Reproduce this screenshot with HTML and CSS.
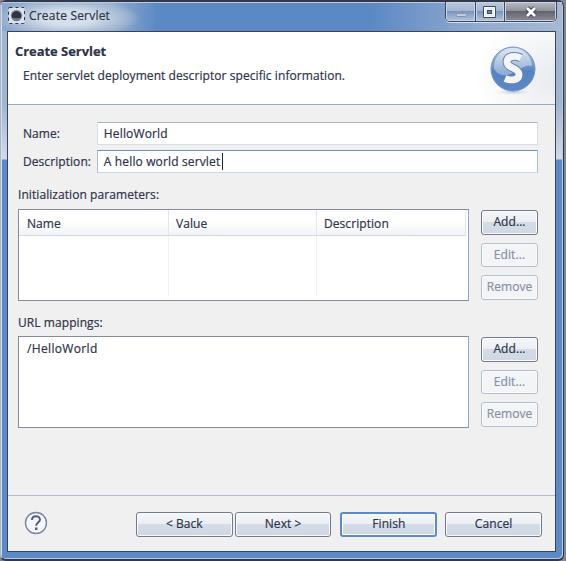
FILE: index.html
```html
<!DOCTYPE html>
<html lang="en">
<head>
<meta charset="utf-8">
<title>Create Servlet</title>
<link rel="stylesheet" href="styles.css">
</head>
<body>
<div class="window">
  <div class="titlebar">
    <svg class="app-icon" width="17" height="17" viewBox="0 0 17 17">
      <rect x=".5" y=".5" width="16" height="16" rx="1" fill="#d9e0e8" stroke="#30364a" stroke-dasharray="3 3"/>
      <circle cx="8.5" cy="8.5" r="6.500" fill="#a2a8b3" stroke="#e9edf2"/>
      <path d="M3.500 9a5 5 0 0 1 10 0l-1 2.500h-8z" fill="#303448"/>
      <path d="M5.500 13h6" stroke="#454b5c"/>
    </svg>
    <span class="title">Create Servlet</span>
    <div class="controls">
      <div class="control minimize"><svg width="30" height="20"><rect x="10.5" y="11.5" width="10" height="3" rx="1" fill="#c2ccda" stroke="#8292ac"/></svg></div>
      <div class="control maximize"><svg width="28" height="20"><rect x="7" y="4" width="13" height="12" rx="1" fill="#454c62"/><rect x="8.5" y="5.5" width="10" height="9" fill="#e8edf4" stroke="#fff"/><rect x="11.5" y="8.5" width="4" height="3" fill="#6984af" stroke="#454c62"/></svg></div>
      <div class="control close"><svg width="51" height="20"><path d="m22 6 8 8m0-8-8 8" stroke="#454957" stroke-width="5"/><path d="m22 6 8 8m0-8-8 8" stroke="#fff" stroke-width="2.8"/></svg></div>
    </div>
  </div>
  <main class="client">
    <header class="banner">
      <div>
        <h1>Create Servlet</h1>
        <p>Enter servlet deployment descriptor specific information.</p>
      </div>
      <svg class="logo" width="50" height="54" viewBox="0 0 50 54">
        <defs>
          <linearGradient id="ball" x2="0" y2="1"><stop stop-color="#b6c7df"/><stop offset=".4" stop-color="#7799cb"/><stop offset=".55" stop-color="#5583c2"/><stop offset="1" stop-color="#5b88c6"/></linearGradient>
          <linearGradient id="shine" x2="0" y2="1"><stop stop-color="#f2f5fa"/><stop offset="1" stop-color="#a8bddb"/></linearGradient>
          <radialGradient id="shade"><stop stop-color="#b9c2cf"/><stop offset="1" stop-color="#fff" stop-opacity="0"/></radialGradient>
        </defs>
        <ellipse cx="25" cy="48" rx="22" ry="4" fill="url(#shade)"/>
        <circle cx="25" cy="25" r="22" fill="url(#ball)" stroke="#7595c4"/>
        <path d="M6 24a19 19 0 0 1 38-2c-8-3-14 7-25 9-6 1-11-2-13-7z" fill="url(#shine)" opacity=".7"/>
        <path d="M33 14c-6-3-14-2-14 4 0 7 12 5 12 12.500 0 6-8 6.500-14 4" fill="none" stroke="#6a85ae" stroke-width="8.800"/>
        <path d="M33 14c-6-3-14-2-14 4 0 7 12 5 12 12.500 0 6-8 6.500-14 4" fill="none" stroke="#f3f4f6" stroke-width="6.800"/>
      </svg>
    </header>
    <section class="content">
      <div class="field"><label>Name:</label><div class="input"><span>HelloWorld</span></div></div>
      <div class="field"><label>Description:</label><div class="input active"><span>A hello world servlet</span><i class="caret"></i></div></div>
      <h2 class="init">Initialization parameters:</h2>
      <div class="group">
        <div class="table">
          <div class="thead"><span>Name</span><span>Value</span><span>Description</span></div>
          <div class="tbody"><span></span><span></span><span></span></div>
        </div>
        <div class="actions"><div class="button">Add...</div><div class="button disabled">Edit...</div><div class="button disabled">Remove</div></div>
      </div>
      <h2 class="urls">URL mappings:</h2>
      <div class="group">
        <div class="table list"><span>/HelloWorld</span></div>
        <div class="actions"><div class="button">Add...</div><div class="button disabled">Edit...</div><div class="button disabled">Remove</div></div>
      </div>
    </section>
    <footer class="footer">
      <svg class="help" width="24" height="24" viewBox="0 0 24 24"><circle cx="12" cy="12" r="10.5" fill="#f4f6f9" stroke="#7a8599" stroke-width="1.4"/><path d="M8 9c0-5 8-5 8-.5 0 3-3.800 3-3.800 6.200" fill="none" stroke="#535d78" stroke-width="2"/><rect x="11" y="16.500" width="2.500" height="2.500" fill="#535d78"/></svg>
      <div class="button wide back">&lt; Back</div>
      <div class="button wide next">Next &gt;</div>
      <div class="button wide default">Finish</div>
      <div class="button wide cancel">Cancel</div>
    </footer>
  </main>
</div>
</body>
</html>
```
FILE: styles.css
```css
* { box-sizing: border-box; }
body {
  margin: 0;
  width: 566px;
  height: 561px;
  overflow: hidden;
  background: #85858e;
  color: #2e3449;
  font: 12px/16px "Open Sans", "Noto Sans", sans-serif;
  letter-spacing: .07px;
  -webkit-text-stroke: .2px;
}
.window {
  width: 564px;
  height: 561px;
  padding: 0 6px 6px 6px;
  border: 1px solid #34384b;
  border-left-color: #a9b6c7;
  border-top-width: 2px;
  border-bottom-width: 2px;
  border-radius: 6px;
  background: linear-gradient(#a1b5d0 0, #a1b5d0 100px, #cfdae7 157px, #5c8ac6 158px);
  box-shadow: inset 1px 1px #d2deeb, inset -1px -1px #b5c9e1;
}
.titlebar {
  display: flex;
  height: 29px;
  margin: 0 -5px;
  padding: 0 5px;
  background:
    radial-gradient(ellipse 72px 20px at 66px 15px, #d5dfeb 35%, #a8bcd6 75%, transparent),
    linear-gradient(90deg, #8ba7ce, #a0b5d2 100px, #5c89c4 155px, #5c89c4 370px, #92acd0 480px, #a5b9d3);
  border-top: 1px solid #b9cbe1;
}
.app-icon { margin: 4px 0 0 1px; }
.title { margin: 5px 0 0 4px; letter-spacing: .2px; }
.controls {
  display: flex;
  height: 20px;
  margin: -1px 0 0 auto;
  border: 1px solid #40465c;
  border-top: 0;
  border-radius: 0 0 5px 5px;
  box-shadow: 0 1px #d5e0ed;
  overflow: hidden;
}
.control {
  border-right: 1px solid #444c64;
  background: linear-gradient(#bbc9dc 0, #a3b6d1 45%, #7794bd 48%, #b3c5de);
  box-shadow: inset 0 0 0 1px #c7d4e4;
}
.control svg { display: block; }
.minimize { width: 30px; }
.maximize { width: 29px; }
.close {
  width: 51px;
  border: 0;
  background: linear-gradient(#bbbbc1 0, #92929b 45%, #62626e 48%, #8e8e98);
}
.client {
  width: 549px;
  height: 521px;
  border: 1px solid #3b4359;
  background: #f0f0f0;
}
.banner {
  display: flex;
  justify-content: space-between;
  height: 73px;
  padding: 0 17px 0 7px;
  border-bottom: 1px solid #92a8c5;
  background: radial-gradient(ellipse 80px 75px at 100% 65%, #e8ebef, transparent), #fff;
}
h1, h2, p { margin: 0; }
h1 { margin-top: 10px; font: 700 13px/18px "Open Sans", sans-serif; letter-spacing: -.05px; }
p { margin: 8px 0 0 8px; }
.logo { margin-top: 12px; }
.content { height: 390px; padding: 17px 17px 0 10px; }
.field { display: flex; height: 23px; margin-bottom: 5px; padding-left: 5px; }
label { width: 74px; padding-top: 4px; white-space: nowrap; }
.input {
  display: flex;
  width: 442px;
  height: 23px;
  padding: 3px 6px;
  border: 1px solid #d6dee9;
  border-top-color: #a8b4c7;
  background: #fff;
  letter-spacing: .14px;
}
.active { border-color: #6f8fc0 #a9bdd8 #c7d5e5; }
.caret { width: 1px; height: 17px; margin: -1px 0 0 2px; background: #202438; }
h2 { height: 31px; padding-top: 9px; font: inherit; }
.group { display: flex; justify-content: space-between; height: 92px; }
.table {
  width: 451px;
  height: 92px;
  border: 1px solid #858b98;
  border-right-color: #8da8ce;
  border-bottom-color: #858b98;
  background: #fff;
}
.thead, .tbody { display: grid; grid-template-columns: 150px 148px 1fr; }
.thead {
  height: 26px;
  margin-right: 2px;
  border-bottom: 1px solid #cedae8;
  background: linear-gradient(#fff 45%, #f1f3f6);
}
.thead span { padding: 6px 0 0 7px; border-right: 1px solid #e3e7ed; }
.thead span:first-child { padding-left: 8px; }
.tbody { height: 60px; }
.tbody span { border-right: 1px solid #edf0f4; }
.tbody span:last-child { border: 0; }
.list { padding: 4px 8px; letter-spacing: .35px; }
.actions { display: grid; gap: 8px; align-content: start; padding-top: 1px; }
.button {
  width: 57px;
  height: 25px;
  padding-top: 3px;
  border: 1px solid #747a8a;
  border-radius: 3px;
  background: linear-gradient(#f5f6f8 0, #ebeff4 46%, #d3dce7 50%, #ced7e2);
  box-shadow: inset 0 0 0 1px #f9fbfd;
  text-align: center;
}
.actions .button { height: 24.5px; }
.disabled { border-color: #b3bfcf; background: #f3f4f6; color: #8791a4; }
.actions .disabled { background: #f3f4f6; }
.urls { height: 35px; padding-top: 14px; }
.footer {
  display: flex;
  height: 56px;
  padding: 16px 13px 0 16px;
  border-top: 1px solid #b3bdcf;
}
.help { margin: -1px 88px 0 0; }
.wide { width: 97px; }
.next { margin: 0 9px 0 2px; }
.cancel { margin-left: 8px; }
.default { border: 2px solid #5e8ac4; padding-top: 2px; }
```
